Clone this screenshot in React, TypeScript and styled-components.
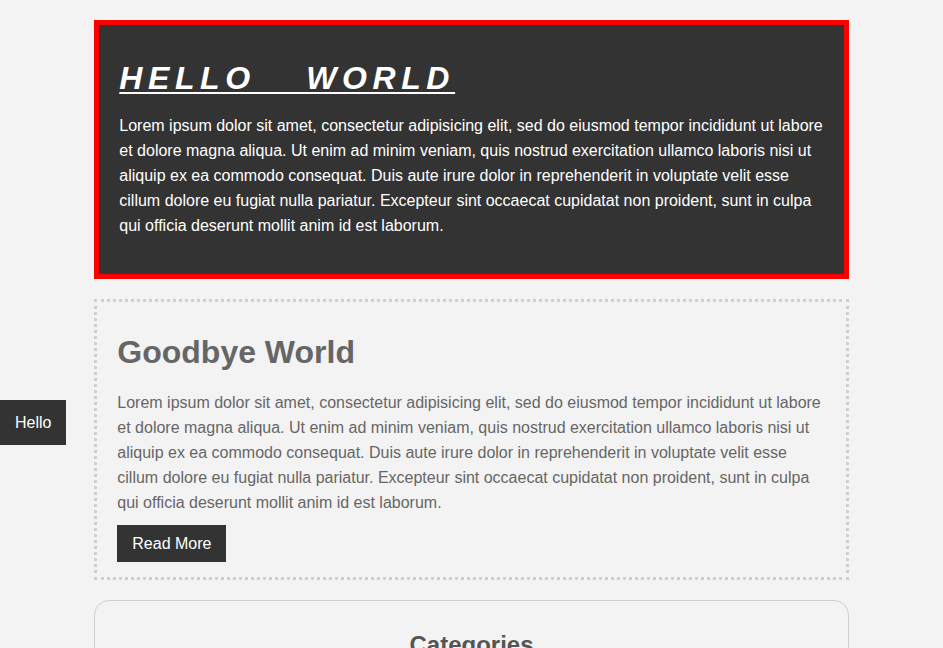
import styled, { createGlobalStyle } from 'styled-components'

const GlobalStyle = createGlobalStyle`
  html, body {
    margin: 0;
    padding: 0;
    background: #f3f3f3;
    font-family: "Liberation Sans", Arial, sans-serif;
  }
`

const LOREM =
  'Lorem ipsum dolor sit amet, consectetur adipisicing elit, sed do eiusmod tempor incididunt ut labore et dolore magna aliqua. Ut enim ad minim veniam, quis nostrud exercitation ullamco laboris nisi ut aliquip ex ea commodo consequat. Duis aute irure dolor in reprehenderit in voluptate velit esse cillum dolore eu fugiat nulla pariatur. Excepteur sint occaecat cupidatat non proident, sunt in culpa qui officia deserunt mollit anim id est laborum.'

const Page = styled.main`
  width: 80%;
  margin: 0 auto;
  padding-top: 20px;
  display: flex;
  flex-direction: column;
  gap: 20px;
`

const HeroCard = styled.section`
  background: #333;
  border: 5px solid #ff0000;
  padding: 20px 20px 36px;
  color: #fff;
`

const HeroTitle = styled.h1`
  margin: 15px 0 16px;
  font-size: 32px;
  font-weight: bold;
  font-style: italic;
  letter-spacing: 5.6px;
  word-spacing: 36px;
  text-decoration: underline;
  text-decoration-thickness: 2px;
  text-underline-offset: 3px;
  line-height: 37px;
`

const Text = styled.p<{ $tone?: string }>`
  margin: 0;
  font-size: 16px;
  line-height: 25px;
  color: ${p => p.$tone ?? 'inherit'};
`

const PostCard = styled.section`
  border: 3px dotted #cfcfcf;
  padding: 20px 20px 15px;
  color: #666;
`

const PostTitle = styled.h2`
  margin: 12px 0 19px;
  font-size: 32px;
  line-height: 37px;
  font-weight: bold;
  color: #666;
`

const Button = styled.button`
  margin-top: 10px;
  display: inline-block;
  background: #333;
  color: #fff;
  border: none;
  border-radius: 0;
  padding: 0 15px;
  height: 37px;
  font-family: inherit;
  font-size: 16px;
`

const ButtonRow = styled.div`
  display: flex;
`

const CategoryCard = styled.section`
  border: 1px solid #cfcfcf;
  border-radius: 15px;
  padding: 30px 20px 20px;
  text-align: center;
`

const CategoryTitle = styled.h3`
  margin: 0;
  font-size: 24px;
  line-height: 28px;
  font-weight: bold;
  color: #555;
`

const SideTab = styled.div`
  position: fixed;
  left: 0;
  top: 400px;
  height: 45px;
  line-height: 45px;
  padding: 0 15px;
  background: #333;
  color: #fff;
  font-size: 16px;
`

export default function App() {
  return (
    <>
      <GlobalStyle />
      <Page>
        <HeroCard>
          <HeroTitle>HELLO WORLD</HeroTitle>
          <Text>{LOREM}</Text>
        </HeroCard>
        <PostCard>
          <PostTitle>Goodbye World</PostTitle>
          <Text $tone="#666">{LOREM}</Text>
          <ButtonRow>
            <Button>Read More</Button>
          </ButtonRow>
        </PostCard>
        <CategoryCard>
          <CategoryTitle>Categories</CategoryTitle>
        </CategoryCard>
      </Page>
      <SideTab>Hello</SideTab>
    </>
  )
}
